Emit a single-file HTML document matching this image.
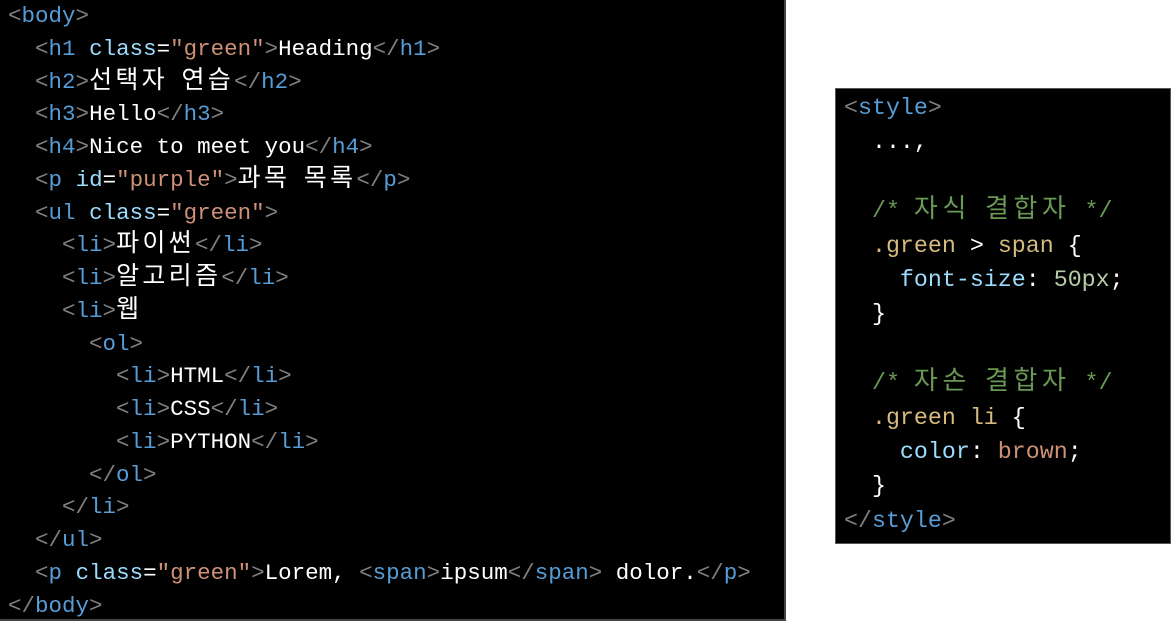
<!DOCTYPE html>
<html><head><meta charset="utf-8"><style>
body{margin:0;width:1172px;height:627px;background:#fff;position:relative;overflow:hidden}
.p{position:absolute;background:#000;font-family:"Liberation Mono","Noto Sans CJK KR",monospace;color:#fff;white-space:pre}
#a{left:0;top:0;width:786px;height:621px;border-right:2px solid #444;border-bottom:2px solid #444;font-size:22.5px;line-height:32.75px;padding:0 0 0 8px;box-sizing:border-box}
#a .c{position:absolute;top:0;left:8px}
#b{left:835px;top:88px;width:336px;height:456px;border:1px solid #555;box-sizing:border-box;font-size:23.3px;line-height:34.4px}
#b .c{position:absolute;top:2px;left:8px}
.k{font-family:"Noto Sans CJK KR",sans-serif;font-size:25px;letter-spacing:3.3px;line-height:1}
#b .k{font-size:26px;letter-spacing:4.6px}
.t{color:#808080}.n{color:#569cd6}.at{color:#9cdcfe}.s{color:#ce9178}.cm{color:#6a9955}.se{color:#d7ba7d}.nu{color:#b5cea8}
</style></head><body>
<div class="p" id="a"><div class="c"><span class="t">&lt;</span><span class="n">body</span><span class="t">&gt;</span>
  <span class="t">&lt;</span><span class="n">h1</span> <span class="at">class</span>=<span class="s">"green"</span><span class="t">&gt;</span>Heading<span class="t">&lt;/</span><span class="n">h1</span><span class="t">&gt;</span>
  <span class="t">&lt;</span><span class="n">h2</span><span class="t">&gt;</span><span class="k">선택자</span> <span class="k">연습</span><span class="t">&lt;/</span><span class="n">h2</span><span class="t">&gt;</span>
  <span class="t">&lt;</span><span class="n">h3</span><span class="t">&gt;</span>Hello<span class="t">&lt;/</span><span class="n">h3</span><span class="t">&gt;</span>
  <span class="t">&lt;</span><span class="n">h4</span><span class="t">&gt;</span>Nice to meet you<span class="t">&lt;/</span><span class="n">h4</span><span class="t">&gt;</span>
  <span class="t">&lt;</span><span class="n">p</span> <span class="at">id</span>=<span class="s">"purple"</span><span class="t">&gt;</span><span class="k">과목</span> <span class="k">목록</span><span class="t">&lt;/</span><span class="n">p</span><span class="t">&gt;</span>
  <span class="t">&lt;</span><span class="n">ul</span> <span class="at">class</span>=<span class="s">"green"</span><span class="t">&gt;</span>
    <span class="t">&lt;</span><span class="n">li</span><span class="t">&gt;</span><span class="k">파이썬</span><span class="t">&lt;/</span><span class="n">li</span><span class="t">&gt;</span>
    <span class="t">&lt;</span><span class="n">li</span><span class="t">&gt;</span><span class="k">알고리즘</span><span class="t">&lt;/</span><span class="n">li</span><span class="t">&gt;</span>
    <span class="t">&lt;</span><span class="n">li</span><span class="t">&gt;</span><span class="k">웹</span>
      <span class="t">&lt;</span><span class="n">ol</span><span class="t">&gt;</span>
        <span class="t">&lt;</span><span class="n">li</span><span class="t">&gt;</span>HTML<span class="t">&lt;/</span><span class="n">li</span><span class="t">&gt;</span>
        <span class="t">&lt;</span><span class="n">li</span><span class="t">&gt;</span>CSS<span class="t">&lt;/</span><span class="n">li</span><span class="t">&gt;</span>
        <span class="t">&lt;</span><span class="n">li</span><span class="t">&gt;</span>PYTHON<span class="t">&lt;/</span><span class="n">li</span><span class="t">&gt;</span>
      <span class="t">&lt;/</span><span class="n">ol</span><span class="t">&gt;</span>
    <span class="t">&lt;/</span><span class="n">li</span><span class="t">&gt;</span>
  <span class="t">&lt;/</span><span class="n">ul</span><span class="t">&gt;</span>
  <span class="t">&lt;</span><span class="n">p</span> <span class="at">class</span>=<span class="s">"green"</span><span class="t">&gt;</span>Lorem, <span class="t">&lt;</span><span class="n">span</span><span class="t">&gt;</span>ipsum<span class="t">&lt;/</span><span class="n">span</span><span class="t">&gt;</span> dolor.<span class="t">&lt;/</span><span class="n">p</span><span class="t">&gt;</span>
<span class="t">&lt;/</span><span class="n">body</span><span class="t">&gt;</span></div></div>
<div class="p" id="b"><div class="c"><span class="t">&lt;</span><span class="n">style</span><span class="t">&gt;</span>
  ...,

  <span class="cm">/* <span class="k">자식</span> <span class="k">결합자</span> */</span>
  <span class="se">.green</span> &gt; <span class="se">span</span> {
    <span class="at">font-size</span>: <span class="nu">50px</span>;
  }

  <span class="cm">/* <span class="k">자손</span> <span class="k">결합자</span> */</span>
  <span class="se">.green li</span> {
    <span class="at">color</span>: <span class="s">brown</span>;
  }
<span class="t">&lt;/</span><span class="n">style</span><span class="t">&gt;</span></div></div>
</body></html>
